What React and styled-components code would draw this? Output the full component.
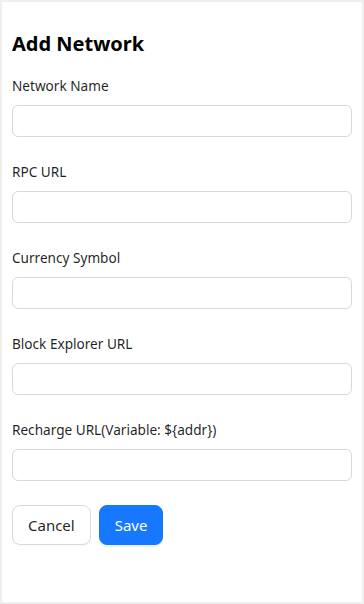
import React from 'react'
import styled, { createGlobalStyle } from 'styled-components'

const GlobalStyle = createGlobalStyle`
  html, body {
    margin: 0;
    padding: 0;
    background: #efefef;
  }
  body {
    font-family: "Noto Sans", "Open Sans", sans-serif;
    color: rgba(0, 0, 0, 0.88);
  }
`

const Page = styled.div`
  padding: 2px;
  height: 604px;
  box-sizing: border-box;
`

const Panel = styled.div`
  background: #fff;
  height: 100%;
  box-sizing: border-box;
  padding: 27px 10px 10px;
`

const Title = styled.h2`
  margin: 0 0 16px;
  font-size: 20px;
  line-height: 30px;
  font-weight: 700;
  color: #000;
`

const Field = styled.div`
  display: flex;
  flex-direction: column;
  margin-bottom: 24px;
`

const Label = styled.label`
  font-size: 13.6px;
  line-height: 22px;
  padding-bottom: 8px;
`

const Input = styled.input`
  height: 32px;
  box-sizing: border-box;
  border: 1px solid #d9d9d9;
  border-radius: 6px;
  padding: 4px 11px;
  font: inherit;
  font-size: 14px;
  outline: none;
  background: #fff;
`

const Actions = styled.div`
  display: flex;
  gap: 8px;
`

const Button = styled.button`
  height: 40px;
  padding: 0 15px;
  border-radius: 8px;
  font-family: inherit;
  font-size: 15px;
  cursor: pointer;
  border: 1px solid ${p => (p.primary ? '#1677ff' : '#d9d9d9')};
  background: ${p => (p.primary ? '#1677ff' : '#fff')};
  color: ${p => (p.primary ? '#fff' : 'rgba(0,0,0,0.88)')};
  box-shadow: ${p => (p.primary ? '0 2px 0 rgba(5,145,255,0.1)' : '0 2px 0 rgba(0,0,0,0.02)')};
`

const fields = [
  'Network Name',
  'RPC URL',
  'Currency Symbol',
  'Block Explorer URL',
  'Recharge URL(Variable: ${addr})',
]

export default function App() {
  return (
    <>
      <GlobalStyle />
      <Page>
        <Panel>
          <Title>Add Network</Title>
          {fields.map(f => (
            <Field key={f}>
              <Label>{f}</Label>
              <Input />
            </Field>
          ))}
          <Actions>
            <Button>Cancel</Button>
            <Button primary>Save</Button>
          </Actions>
        </Panel>
      </Page>
    </>
  )
}
